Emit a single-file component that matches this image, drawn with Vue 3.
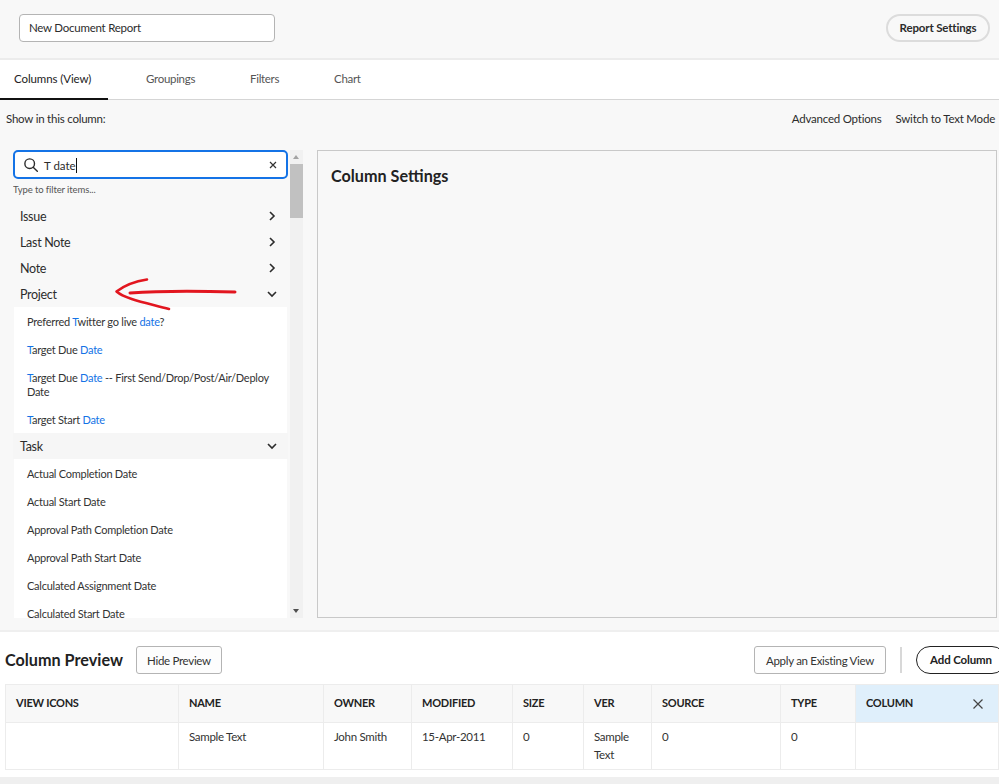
<script setup>
const tabs = ['Columns (View)', 'Groupings', 'Filters', 'Chart']

const closedGroups = ['Issue', 'Last Note', 'Note']

const projectItems = [
  [['Preferred ', 0], ['T', 1], ['witter go live ', 0], ['date', 1], ['?', 0]],
  [['T', 1], ['arget Due ', 0], ['Date', 1]],
  [['T', 1], ['arget Due ', 0], ['Date', 1], [' -- First Send/Drop/Post/Air/Deploy Date', 0]],
  [['T', 1], ['arget Start ', 0], ['Date', 1]]
]

const taskItems = [
  'Actual Completion Date',
  'Actual Start Date',
  'Approval Path Completion Date',
  'Approval Path Start Date',
  'Calculated Assignment Date',
  'Calculated Start Date'
]

const columns = [
  { title: 'VIEW ICONS', value: '', width: 173 },
  { title: 'NAME', value: 'Sample Text', width: 145 },
  { title: 'OWNER', value: 'John Smith', width: 88 },
  { title: 'MODIFIED', value: '15-Apr-2011', width: 101 },
  { title: 'SIZE', value: '0', width: 71 },
  { title: 'VER', value: 'Sample Text', width: 68 },
  { title: 'SOURCE', value: '0', width: 129 },
  { title: 'TYPE', value: '0', width: 75 }
]
</script>

<template>
  <div class="page">
    <header class="top">
      <div class="name-input">New Document Report</div>
      <button class="pill">Report Settings</button>
    </header>

    <nav class="tabs">
      <span v-for="(tab, i) in tabs" :key="tab" class="tab" :class="{ active: i === 0 }">{{ tab }}</span>
    </nav>

    <section class="editor">
      <div class="toolbar">
        <span>Show in this column:</span>
        <div class="links">
          <span>Advanced Options</span>
          <span>Switch to Text Mode</span>
        </div>
      </div>

      <div class="panes">
        <div class="picker">
          <div class="list">
            <div class="search">
              <svg class="search-icon" width="14" height="14" viewBox="0 0 16 16" fill="none" stroke="#2c2c2c" stroke-width="1.6">
                <circle cx="6.500" cy="6.500" r="5.500" />
                <path d="M10.500 10.500 15.200 15.200" stroke-linecap="round" />
              </svg>
              <span class="query">T date</span>
              <svg class="clear" width="8" height="8" viewBox="0 0 8 8" stroke="#333" stroke-width="1.2">
                <path d="M1 1l6 6M7 1l-6 6" />
              </svg>
            </div>
            <p class="hint">Type to filter items...</p>

            <div v-for="group in closedGroups" :key="group" class="group">
              <span>{{ group }}</span>
              <svg width="10" height="10" viewBox="0 0 10 10" fill="none" stroke="#2c2c2c" stroke-width="1.6">
                <path d="M3 1l4 4-4 4" />
              </svg>
            </div>

            <div class="group">
              <span>Project</span>
              <svg width="10" height="10" viewBox="0 0 10 10" fill="none" stroke="#2c2c2c" stroke-width="1.6">
                <path d="M1 3l4 4 4-4" />
              </svg>
            </div>
            <ul class="items">
              <li v-for="(item, i) in projectItems" :key="i">
                <span v-for="(part, j) in item" :key="j" :class="{ hit: part[1] }">{{ part[0] }}</span>
              </li>
            </ul>

            <div class="group task">
              <span>Task</span>
              <svg width="10" height="10" viewBox="0 0 10 10" fill="none" stroke="#2c2c2c" stroke-width="1.6">
                <path d="M1 3l4 4 4-4" />
              </svg>
            </div>
            <ul class="items">
              <li v-for="item in taskItems" :key="item">{{ item }}</li>
            </ul>
          </div>

          <div class="scrollbar">
            <span class="arrow up"></span>
            <span class="thumb"></span>
            <span class="arrow down"></span>
          </div>

          <!-- hand drawn annotation on top of the list -->
          <svg class="scribble" width="130" height="40" viewBox="0 0 130 40" fill="none" stroke="#e2161f" stroke-linecap="round" stroke-linejoin="round">
            <path d="M34 1.500C24 3 12 7 3.500 13.500 12 21 34 25 56 31" stroke-width="2.600" />
            <path d="M17 15C50 12.500 90 13 122 14" stroke-width="3" />
          </svg>
        </div>

        <div class="settings">
          <h2>Column Settings</h2>
        </div>
      </div>
    </section>

    <section class="preview">
      <div class="preview-head">
        <h2>Column Preview</h2>
        <button class="square hide">Hide Preview</button>
        <div class="preview-actions">
          <button class="square apply">Apply an Existing View</button>
          <span class="divider"></span>
          <button class="add">Add Column</button>
        </div>
      </div>

      <table class="grid">
        <colgroup>
          <col v-for="col in columns" :key="col.title" :style="{ width: col.width + 'px' }" />
          <col />
        </colgroup>
        <thead>
          <tr>
            <th v-for="col in columns" :key="col.title">{{ col.title }}</th>
            <th class="new-col">
              COLUMN
              <svg class="close" width="10" height="10" viewBox="0 0 10 10" stroke="#444" stroke-width="1.200">
                <path d="M.5.5l9 9M9.500.5l-9 9" />
              </svg>
            </th>
          </tr>
        </thead>
        <tbody>
          <tr>
            <td v-for="col in columns" :key="col.title">{{ col.value }}</td>
            <td></td>
          </tr>
        </tbody>
      </table>
    </section>
    <div class="foot"></div>
  </div>
</template>

<style>
html,
body {
  margin: 0;
  background: #fff;
}
</style>

<style scoped>
.page {
  width: 999px;
  height: 784px;
  overflow: hidden;
  display: flex;
  flex-direction: column;
  font-family: Lato, "Noto Sans", sans-serif;
  font-size: 11.500px;
  letter-spacing: -0.3px;
  color: #2c2c2c;
  background: #fff;
}
.top {
  height: 60px;
  flex: none;
  box-sizing: border-box;
  padding: 14px 9px 0 19px;
  display: flex;
  justify-content: space-between;
  align-items: flex-start;
  background: #f8f8f8;
  border-bottom: 2px solid #ececec;
}
.name-input {
  width: 256px;
  height: 28px;
  box-sizing: border-box;
  padding-left: 9px;
  line-height: 26px;
  letter-spacing: -0.25px;
  background: #fff;
  border: 1px solid #b4b4b4;
  border-radius: 4px;
}
.pill {
  width: 104px;
  height: 28px;
  padding: 0 0 2px;
  font: 700 11.500px Lato, sans-serif;
  letter-spacing: -0.15px;
  color: #2c2c2c;
  background: #f8f8f8;
  border: 2px solid #dcdcdc;
  border-radius: 14px;
}
.tabs {
  height: 40px;
  flex: none;
  box-sizing: border-box;
  display: flex;
  background: #fff;
  border-bottom: 1px solid #d5d5d5;
}
.tab {
  box-sizing: border-box;
  height: 40px;
  line-height: 38px;
  color: #555;
}
.tab:nth-child(1) {
  width: 108px;
  padding: 0 0 0 14px;
  margin-right: 38px;
  letter-spacing: -0.1px;
  color: #222;
  border-bottom: 2px solid #111;
}
.tab:nth-child(2) {
  width: 104px;
}
.tab:nth-child(3) {
  width: 84px;
}
.editor {
  height: 532px;
  flex: none;
  box-sizing: border-box;
  padding: 0 2px 12px 0;
  display: flex;
  flex-direction: column;
  background: #f8f8f8;
  border-bottom: 2px solid #efefef;
}
.toolbar {
  height: 50px;
  flex: none;
  box-sizing: border-box;
  padding: 10px 2px 0 6px;
  display: flex;
  justify-content: space-between;
  line-height: 18px;
  letter-spacing: -0.22px;
}
.links {
  display: flex;
  gap: 14px;
}
.panes {
  flex: 1;
  min-height: 0;
  display: flex;
  padding-left: 13px;
  gap: 14px;
}
.picker {
  position: relative;
  width: 290px;
  flex: none;
  display: flex;
  gap: 2px;
  overflow: hidden;
}
.list {
  width: 275px;
  flex: none;
  overflow: hidden;
}
.search {
  height: 29px;
  box-sizing: border-box;
  padding: 0 9px 0 9px;
  display: flex;
  align-items: center;
  background: #fff;
  border: 2px solid #1473e6;
  border-radius: 5px;
}
.query {
  flex: 1;
  margin-left: 6px;
  letter-spacing: 0;
  color: #2c2c2c;
}
.query::after {
  content: "";
  display: inline-block;
  width: 1px;
  height: 15px;
  margin-bottom: -3px;
  background: #111;
}
.hint {
  margin: 3px 0 0;
  height: 21px;
  font-size: 9.500px;
  letter-spacing: -0.1px;
  line-height: 16px;
  color: #555;
}
.group {
  height: 26px;
  padding: 0 11px 0 7px;
  display: flex;
  justify-content: space-between;
  align-items: center;
  font-size: 12.500px;
}
.task {
  background: #f6f6f6;
}
.items {
  margin: 0 1px;
  padding: 0;
  list-style: none;
  background: #fff;
}
.items li {
  padding: 8px 12px 6px 13px;
  font-size: 11px;
  letter-spacing: -0.25px;
  line-height: 14px;
  color: #333;
}
.hit {
  color: #1473e6;
}
.scrollbar {
  width: 13px;
  flex: none;
  display: flex;
  flex-direction: column;
  background: #f1f1f1;
}
.arrow {
  height: 14px;
  flex: none;
  position: relative;
}
.arrow::after {
  content: "";
  position: absolute;
  left: 3px;
  border-left: 3.500px solid transparent;
  border-right: 3.500px solid transparent;
}
.up::after {
  top: 5px;
  border-bottom: 4px solid #a3a3a3;
}
.down {
  margin-top: auto;
}
.down::after {
  top: 5px;
  border-top: 4px solid #505050;
}
.thumb {
  height: 54px;
  background: #c1c1c1;
}
.scribble {
  position: absolute;
  left: 100px;
  top: 128px;
}
.settings {
  width: 680px;
  box-sizing: border-box;
  padding: 15px 13px;
  border: 1px solid #c9c9c9;
}
.settings h2,
.preview h2 {
  margin: 0;
  font-size: 16.200px;
  letter-spacing: 0;
  font-weight: 700;
  color: #222;
}
.preview {
  flex: none;
  box-sizing: border-box;
  padding: 14px 0 0 5px;
  background: #fff;
}
.preview-head {
  height: 38px;
  display: flex;
  align-items: flex-start;
}
.preview-head h2 {
  line-height: 28px;
  margin-right: 13px;
}
.square {
  height: 28px;
  padding: 0;
  font: 11.500px Lato, sans-serif;
  letter-spacing: -0.3px;
  color: #333;
  background: #fdfdfd;
  border: 1px solid #b4b4b4;
  border-radius: 3px;
}
.hide {
  width: 86px;
}
.apply {
  width: 132px;
}
.preview-actions {
  margin-left: auto;
  display: flex;
  align-items: center;
}
.divider {
  width: 2px;
  height: 26px;
  margin: 0 14px;
  background: #d8d8d8;
}
.add {
  width: 90px;
  height: 28px;
  margin-right: -7px;
  padding: 0 0 2px;
  font: 700 11.500px Lato, sans-serif;
  letter-spacing: -0.15px;
  color: #222;
  background: #fff;
  border: 1.500px solid #222;
  border-radius: 14px;
}
.grid {
  width: 994px;
  table-layout: fixed;
  border-collapse: collapse;
  border: 1px solid #ececec;
}
.grid th {
  height: 38px;
  box-sizing: border-box;
  padding: 0 10px 2px;
  text-align: left;
  font-size: 11px;
  letter-spacing: -0.25px;
  font-weight: 700;
  color: #222;
  background: #f8f8f8;
  border: 1px solid #ececec;
}
.grid td {
  height: 46px;
  box-sizing: border-box;
  padding: 5px 10px;
  vertical-align: top;
  line-height: 18px;
  color: #333;
  border: 1px solid #ececec;
}
.grid th.new-col {
  position: relative;
  background: #dfeffb;
}
.close {
  position: absolute;
  right: 15px;
  top: 14px;
}
.foot {
  margin-top: 7px;
  flex: 1;
  background: #efefef;
}
</style>
